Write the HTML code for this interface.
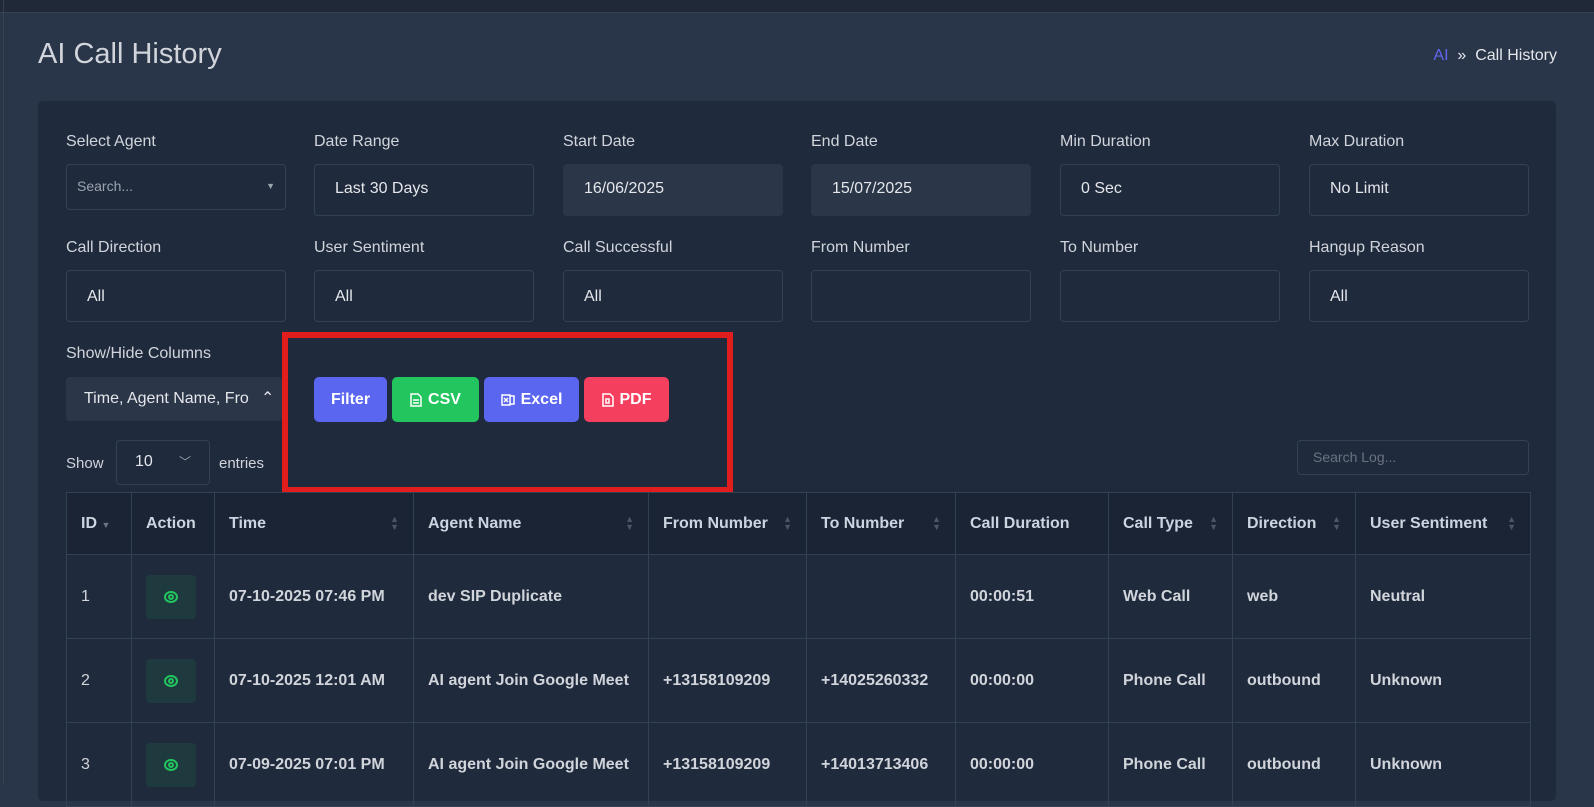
<!DOCTYPE html>
<html><head><meta charset="utf-8"><style>
*{box-sizing:border-box;margin:0;padding:0}
body{width:1594px;height:784px;overflow:hidden;background:#293548;font-family:"Liberation Sans",sans-serif;color:#d1d5db;position:relative}
.top{position:absolute;left:0;top:0;width:1594px;height:13px;background:#1f2937;border-bottom:1px solid #374151}
.vl{position:absolute;left:3px;top:0;width:1px;height:784px;background:#374151}
h1{position:absolute;left:38px;top:38px;font-size:29px;font-weight:400;color:#d1d5db}
.bc{position:absolute;right:37px;top:47px;font-size:16px;color:#e5e7eb}
.bc span{color:#6366f1}
.card{position:absolute;left:38px;top:101px;width:1518px;height:700px;background:#1f2a3c;border-radius:5px}
.lbl{position:absolute;font-size:16px;color:#d1d5db}
.inp{position:absolute;width:220px;height:52px;border:1px solid #334155;border-radius:4px;font-size:16px;color:#e5e7eb;padding:15px 20px}
.fill{background:#2b3648;border-color:#2b3648}
.btn{position:absolute;top:377px;height:45px;border-radius:5px;color:#fff;font-size:16px;font-weight:bold;display:flex;align-items:center;justify-content:center;gap:6px}
.red{position:absolute;left:282px;top:332px;width:451px;height:161px;border:6px solid #e11d1d}
table{position:absolute;left:66px;top:492px;border-collapse:collapse;font-size:16px}
td,th{border:1px solid #334155;text-align:left;padding:0 14px;color:#d1d5db}
th{height:62px;background:#1b2434;font-weight:bold;color:#cbd5e1}
td{height:84px;font-weight:bold}
.eye{width:50px;height:44px;background:#1f3a3f;border-radius:4px;display:flex;align-items:center;justify-content:center}
.so{float:right;font-size:9px;color:#4b5563;line-height:8px}
</style></head><body>
<div class="top"></div><div class="vl"></div>
<h1>AI Call History</h1>
<div class="bc"><span>AI</span> &nbsp;»&nbsp; Call History</div>
<div class="card"></div>
<div class="lbl" style="left:66px;top:133px">Select Agent</div>
<div class="lbl" style="left:314px;top:133px">Date Range</div>
<div class="lbl" style="left:563px;top:133px">Start Date</div>
<div class="lbl" style="left:811px;top:133px">End Date</div>
<div class="lbl" style="left:1060px;top:133px">Min Duration</div>
<div class="lbl" style="left:1309px;top:133px">Max Duration</div>
<div class="inp" style="left:66px;top:164px;height:46px;padding:13px 10px;font-size:14px;color:#9ca3af">Search...<span style="float:right;font-size:9px;margin-top:3px">▼</span></div>
<div class="inp" style="left:314px;top:164px">Last 30 Days</div>
<div class="inp fill" style="left:563px;top:164px">16/06/2025</div>
<div class="inp fill" style="left:811px;top:164px">15/07/2025</div>
<div class="inp" style="left:1060px;top:164px">0 Sec</div>
<div class="inp" style="left:1309px;top:164px">No Limit</div>
<div class="lbl" style="left:66px;top:239px">Call Direction</div>
<div class="lbl" style="left:314px;top:239px">User Sentiment</div>
<div class="lbl" style="left:563px;top:239px">Call Successful</div>
<div class="lbl" style="left:811px;top:239px">From Number</div>
<div class="lbl" style="left:1060px;top:239px">To Number</div>
<div class="lbl" style="left:1309px;top:239px">Hangup Reason</div>
<div class="inp" style="left:66px;top:270px;padding-top:17px">All</div>
<div class="inp" style="left:314px;top:270px;padding-top:17px">All</div>
<div class="inp" style="left:563px;top:270px;padding-top:17px">All</div>
<div class="inp" style="left:811px;top:270px"></div>
<div class="inp" style="left:1060px;top:270px"></div>
<div class="inp" style="left:1309px;top:270px;padding-top:17px">All</div>
<div class="lbl" style="left:66px;top:345px">Show/Hide Columns</div>
<div class="inp fill" style="left:66px;top:377px;width:216px;height:44px;padding:12px 17px;overflow:hidden;white-space:nowrap">Time, Agent Name, Fro<span style="position:absolute;left:190px;top:10px;background:#2b3648;padding:0 4px">⌃</span></div>
<div class="btn" style="left:314px;width:73px;background:#5b66f0">Filter</div>
<div class="btn" style="left:392px;width:87px;background:#22c55e"><svg width="12" height="14" viewBox="0 0 12 14" fill="none" stroke="#fff" stroke-width="1.5"><path d="M1 1h7l3 3v9H1z M3 7h6M3 10h6"/></svg>CSV</div>
<div class="btn" style="left:484px;width:95px;background:#5b66f0"><svg width="14" height="14" viewBox="0 0 14 14" fill="none" stroke="#fff" stroke-width="1.5"><path d="M1 2h8v10H1z M9 3h4v8H9 M3 5l4 4M7 5l-4 4"/></svg>Excel</div>
<div class="btn" style="left:584px;width:85px;background:#f43f5e"><svg width="12" height="14" viewBox="0 0 12 14" fill="none" stroke="#fff" stroke-width="1.5"><path d="M1 1h7l3 3v9H1z M4 6h3v4H4z"/></svg>PDF</div>
<div class="red"></div>
<div class="lbl" style="left:66px;top:455px;font-size:15px">Show</div>
<div class="inp" style="left:116px;top:440px;width:94px;height:45px;padding:12px 18px">10<span style="float:right;font-size:12px;color:#9ca3af">﹀</span></div>
<div class="lbl" style="left:219px;top:455px;font-size:15px">entries</div>
<div class="inp" style="left:1297px;top:440px;width:232px;height:35px;padding:8px 15px;font-size:14px;color:#6b7280">Search Log...</div>
<table>
<tr><th style="width:65px">ID <span style="font-size:9px;color:#6b7280">▼</span></th><th style="width:83px">Action</th><th style="width:199px">Time<span class="so">▲<br>▼</span></th><th style="width:235px">Agent Name<span class="so">▲<br>▼</span></th><th style="width:158px">From Number<span class="so">▲<br>▼</span></th><th style="width:149px">To Number<span class="so">▲<br>▼</span></th><th style="width:153px">Call Duration</th><th style="width:124px">Call Type<span class="so">▲<br>▼</span></th><th style="width:123px">Direction<span class="so">▲<br>▼</span></th><th style="width:175px">User Sentiment<span class="so">▲<br>▼</span></th></tr>
<tr><td style="font-weight:normal">1</td><td><div class="eye"><svg width="14" height="14" viewBox="0 0 14 14" fill="none" stroke="#22c55e" stroke-width="2"><ellipse cx="7" cy="7" rx="6" ry="5"/><circle cx="7" cy="7" r="2"/></svg></div></td><td>07-10-2025 07:46 PM</td><td>dev SIP Duplicate</td><td></td><td></td><td>00:00:51</td><td>Web Call</td><td>web</td><td>Neutral</td></tr>
<tr><td style="font-weight:normal">2</td><td><div class="eye"><svg width="14" height="14" viewBox="0 0 14 14" fill="none" stroke="#22c55e" stroke-width="2"><ellipse cx="7" cy="7" rx="6" ry="5"/><circle cx="7" cy="7" r="2"/></svg></div></td><td>07-10-2025 12:01 AM</td><td>AI agent Join Google Meet</td><td>+13158109209</td><td>+14025260332</td><td>00:00:00</td><td>Phone Call</td><td>outbound</td><td>Unknown</td></tr>
<tr><td style="font-weight:normal">3</td><td><div class="eye"><svg width="14" height="14" viewBox="0 0 14 14" fill="none" stroke="#22c55e" stroke-width="2"><ellipse cx="7" cy="7" rx="6" ry="5"/><circle cx="7" cy="7" r="2"/></svg></div></td><td>07-09-2025 07:01 PM</td><td>AI agent Join Google Meet</td><td>+13158109209</td><td>+14013713406</td><td>00:00:00</td><td>Phone Call</td><td>outbound</td><td>Unknown</td></tr>
</table>
</body></html>
